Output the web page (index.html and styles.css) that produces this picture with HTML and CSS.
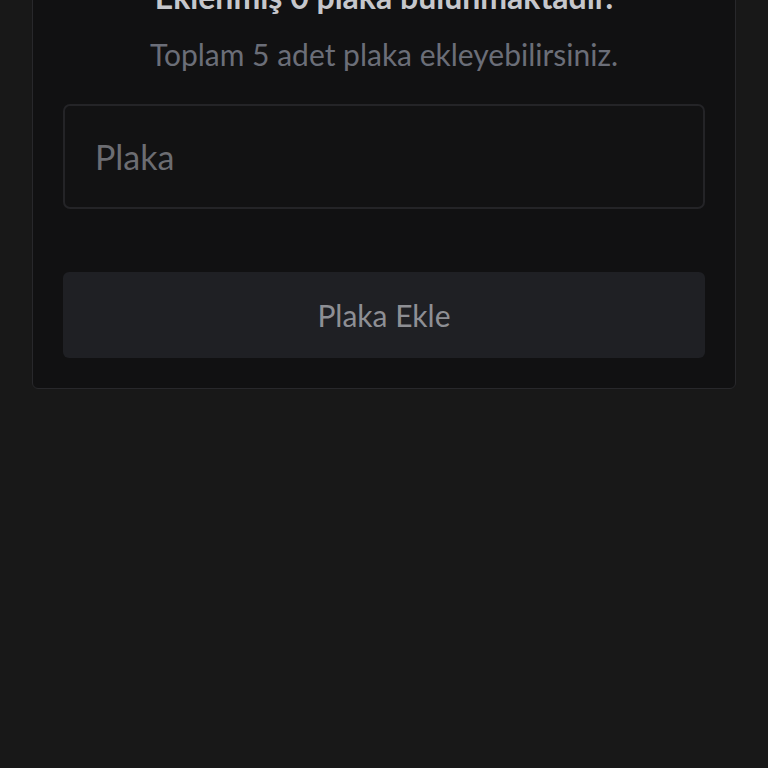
FILE: index.html
```html
<!DOCTYPE html>
<html lang="tr">
<head>
<meta charset="utf-8">
<title>Plaka</title>
<link rel="stylesheet" href="styles.css">
</head>
<body>
<main class="page">
  <section class="card">
    <h2 class="title">Eklenmiş 0 plaka bulunmaktadır.</h2>
    <p class="subtitle">Toplam 5 adet plaka ekleyebilirsiniz.</p>
    <input class="field" type="text" placeholder="Plaka">
    <button class="btn" type="button">Plaka Ekle</button>
  </section>
</main>
</body>
</html>
```

FILE: styles.css
```css
html, body {
  margin: 0;
  padding: 0;
  background: #181818;
  height: 100%;
  overflow: hidden;
}
body {
  font-family: "Lato", "Open Sans", sans-serif;
}
.page {
  padding: 0 32px;
  margin-top: -54px;
}
.card {
  display: flex;
  flex-direction: column;
  background: #111112;
  border: 1px solid #28282b;
  border-radius: 6px;
  padding: 30px;
}
.title {
  margin: 0;
  text-align: center;
  font-size: 32px;
  line-height: 40px;
  font-weight: 700;
  color: #c6c7cc;
}
.subtitle {
  margin: 19px 0 0;
  text-align: center;
  font-size: 30px;
  line-height: 36px;
  color: #6b6e78;
}
.field {
  margin-top: 32px;
  height: 105px;
  box-sizing: border-box;
  background: #121213;
  border: 2px solid #242427;
  border-radius: 7px;
  padding: 0 30px;
  font-family: inherit;
  font-size: 34px;
  color: #c9cacf;
  outline: none;
}
.field::placeholder {
  color: #6c6d72;
}
.btn {
  margin-top: 63px;
  height: 86px;
  background: #1f2024;
  border: none;
  border-radius: 6px;
  font-family: inherit;
  font-size: 30px;
  color: #8e8f94;
}
```
